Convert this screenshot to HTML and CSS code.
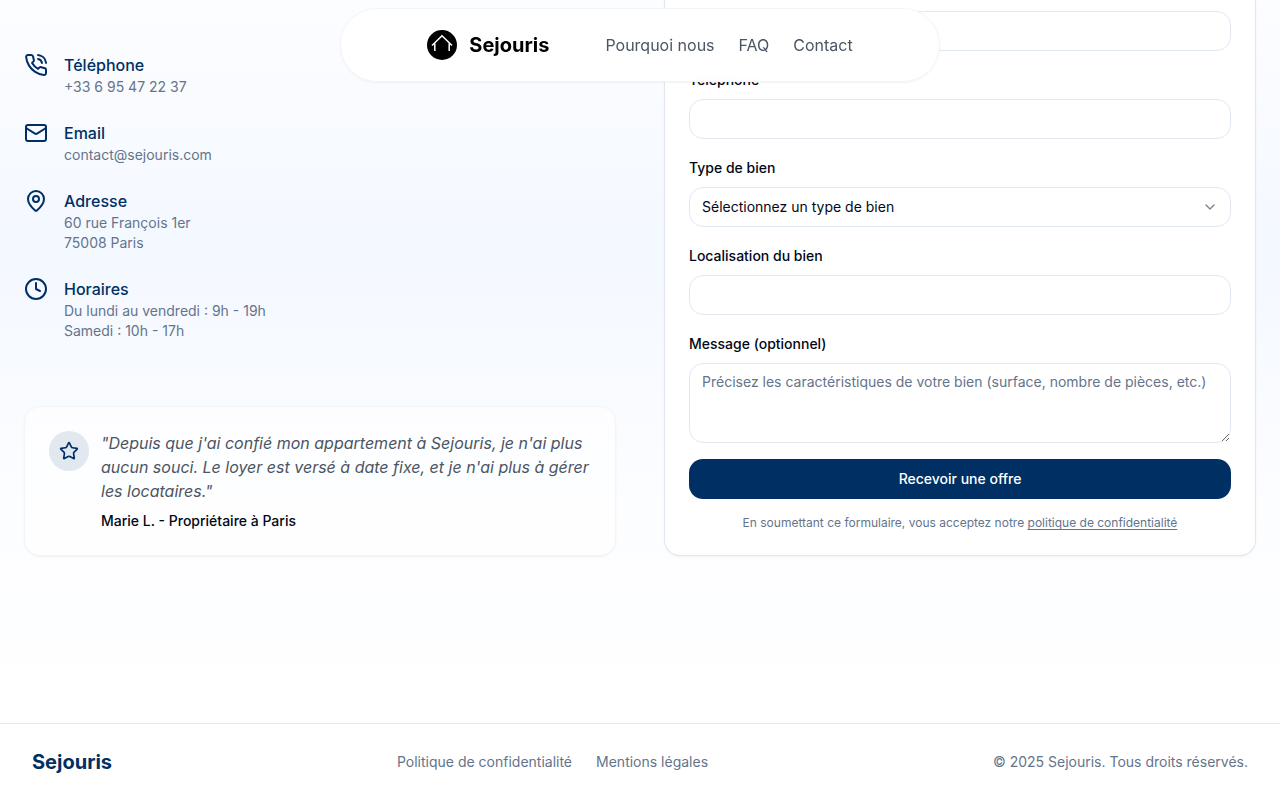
FILE: index.html
```html
<!DOCTYPE html>
<html lang="fr">
<head>
<meta charset="utf-8">
<meta name="viewport" content="width=device-width, initial-scale=1">
<title>Sejouris</title>
<link rel="stylesheet" href="styles.css">
</head>
<body>
<header class="navbar">
  <a class="brand" href="#">
    <svg class="brand-logo" viewBox="0 0 30 30" aria-hidden="true">
      <circle cx="15" cy="15" r="15" fill="#000"/>
      <path d="M5 15.500 15 5.800l10 9.700M7.800 13.500V21M22.200 13.500V21" fill="none" stroke="#fff" stroke-width="1.500"/>
    </svg>
    <span>Sejouris</span>
  </a>
  <nav class="nav-links">
    <a href="#">Pourquoi nous</a>
    <a href="#">FAQ</a>
    <a href="#">Contact</a>
  </nav>
</header>

<main class="contact">
  <div class="info">
    <ul class="details">
      <li class="detail">
        <svg class="icon" viewBox="0 0 24 24" aria-hidden="true"><path d="M22 16.920v3a2 2 0 0 1-2.180 2 19.790 19.790 0 0 1-8.630-3.070 19.500 19.500 0 0 1-6-6 19.790 19.790 0 0 1-3.070-8.670A2 2 0 0 1 4.110 2h3a2 2 0 0 1 2 1.720 12.840 12.840 0 0 0 .7 2.810 2 2 0 0 1-.45 2.110L8.090 9.910a16 16 0 0 0 6 6l1.270-1.270a2 2 0 0 1 2.110-.45 12.840 12.840 0 0 0 2.810.7A2 2 0 0 1 22 16.920z"/><path d="M14.050 2a9 9 0 0 1 8 7.940"/><path d="M14.050 6A5 5 0 0 1 18 10"/></svg>
        <div><h3>Téléphone</h3><p>+33 6 95 47 22 37</p></div>
      </li>
      <li class="detail">
        <svg class="icon" viewBox="0 0 24 24" aria-hidden="true"><rect width="20" height="16" x="2" y="4" rx="2"/><path d="m22 7-8.970 5.700a1.940 1.940 0 0 1-2.060 0L2 7"/></svg>
        <div><h3>Email</h3><p>contact@sejouris.com</p></div>
      </li>
      <li class="detail">
        <svg class="icon" viewBox="0 0 24 24" aria-hidden="true"><path d="M20 10c0 4.993-5.539 10.193-7.399 11.799a1 1 0 0 1-1.202 0C9.539 20.193 4 14.993 4 10a8 8 0 0 1 16 0"/><circle cx="12" cy="10" r="3"/></svg>
        <div><h3>Adresse</h3><p>60 rue François 1er<br>75008 Paris</p></div>
      </li>
      <li class="detail">
        <svg class="icon" viewBox="0 0 24 24" aria-hidden="true"><circle cx="12" cy="12" r="10"/><path d="M12 6v6l4 2"/></svg>
        <div><h3>Horaires</h3><p>Du lundi au vendredi : 9h - 19h<br>Samedi : 10h - 17h</p></div>
      </li>
    </ul>
    <figure class="quote">
      <span class="quote-badge">
        <svg class="star" viewBox="0 0 24 24" aria-hidden="true"><path d="M11.525 2.295a.53.53 0 0 1 .95 0l2.310 4.679a2.123 2.123 0 0 0 1.595 1.160l5.166.756a.53.53 0 0 1 .294.904l-3.736 3.638a2.123 2.123 0 0 0-.611 1.878l.882 5.140a.53.53 0 0 1-.771.560l-4.618-2.428a2.122 2.122 0 0 0-1.973 0L6.396 21.010a.53.53 0 0 1-.770-.560l.881-5.139a2.122 2.122 0 0 0-.611-1.879L2.160 9.795a.53.53 0 0 1 .294-.906l5.165-.755a2.122 2.122 0 0 0 1.597-1.160z"/></svg>
      </span>
      <div>
        <blockquote>"Depuis que j'ai confié mon appartement à Sejouris, je n'ai plus aucun souci. Le loyer est versé à date fixe, et je n'ai plus à gérer les locataires."</blockquote>
        <figcaption>Marie L. - Propriétaire à Paris</figcaption>
      </div>
    </figure>
  </div>

  <form class="card">
    <div class="field">
      <input id="email" type="email" aria-label="Email">
    </div>
    <div class="field">
      <label for="phone">Téléphone</label>
      <input id="phone" type="tel">
    </div>
    <div class="field">
      <label for="kind">Type de bien</label>
      <div class="select-wrap">
        <select id="kind"><option>Sélectionnez un type de bien</option></select>
        <svg class="chevron" viewBox="0 0 24 24" aria-hidden="true"><path d="m6 9 6 6 6-6"/></svg>
      </div>
    </div>
    <div class="field">
      <label for="place">Localisation du bien</label>
      <input id="place" type="text">
    </div>
    <div class="field">
      <label for="message">Message (optionnel)</label>
      <textarea id="message" placeholder="Précisez les caractéristiques de votre bien (surface, nombre de pièces, etc.)"></textarea>
    </div>
    <button class="submit" type="submit">Recevoir une offre</button>
    <p class="consent">En soumettant ce formulaire, vous acceptez notre <a href="#">politique de confidentialité</a></p>
  </form>
</main>

<footer class="footer">
  <a class="footer-brand" href="#">Sejouris</a>
  <nav class="footer-links">
    <a href="#">Politique de confidentialité</a>
    <a href="#">Mentions légales</a>
  </nav>
  <p>© 2025 Sejouris. Tous droits réservés.</p>
</footer>
</body>
</html>
```

FILE: styles.css
```css
* {
  box-sizing: border-box;
  margin: 0;
  padding: 0;
}

body {
  min-height: 100vh;
  display: flex;
  flex-direction: column;
  font-family: Inter, "Liberation Sans", sans-serif;
  font-size: 14px;
  line-height: 20px;
  color: #020817;
  background: #fff;
}

a {
  color: inherit;
  text-decoration: none;
}

/* Floating navigation */
.navbar {
  position: fixed;
  z-index: 10;
  top: 8px;
  left: 50%;
  transform: translateX(-50%);
  width: 600px;
  max-width: calc(100% - 32px);
  height: 74px;
  display: flex;
  align-items: center;
  justify-content: center;
  gap: 56px;
  border: 1px solid #f3f4f6;
  border-radius: 37px;
  background: rgba(255, 255, 255, 0.98);
  backdrop-filter: blur(4px);
  box-shadow: 0 1px 2px rgba(0, 0, 0, 0.05);
}

.brand {
  display: flex;
  align-items: center;
  gap: 12px;
  font-size: 20px;
  line-height: 28px;
  font-weight: 700;
  color: #000;
}

.brand-logo {
  width: 30px;
  height: 30px;
}

.nav-links {
  display: flex;
  gap: 24px;
  font-size: 16px;
  line-height: 24px;
  color: #4b5563;
}

/* Contact section */
.contact {
  flex: 1;
  display: grid;
  grid-template-columns: 1fr 1fr;
  align-items: start;
  gap: 48px;
  padding: 0 24px 167px;
  background: linear-gradient(to bottom, #fcfdff 0, #f4f8ff 250px, #fcfdff 500px, #fff 100%);
}

.info {
  padding-top: 53px;
}

.details {
  display: grid;
  gap: 24px;
  list-style: none;
}

.detail {
  display: flex;
  gap: 16px;
}

.icon,
.star,
.chevron {
  flex: none;
  fill: none;
  stroke: currentColor;
  stroke-width: 2;
  stroke-linecap: round;
  stroke-linejoin: round;
}

.icon {
  width: 24px;
  height: 24px;
  color: #002f64;
}

.detail h3 {
  font-size: 16px;
  line-height: 24px;
  font-weight: 500;
  color: #002f64;
}

.detail p {
  color: #64748b;
}

.quote {
  display: flex;
  gap: 12px;
  margin-top: 65px;
  padding: 24px;
  border: 1px solid #f3f4f6;
  border-radius: 16px;
  background: rgba(255, 255, 255, 0.6);
  box-shadow: 0 1px 2px rgba(0, 0, 0, 0.05);
}

.quote-badge {
  flex: none;
  display: flex;
  align-items: center;
  justify-content: center;
  width: 40px;
  height: 40px;
  border-radius: 50%;
  background: #e2e8f0;
  color: #002f64;
}

.star {
  width: 20px;
  height: 20px;
}

.quote blockquote {
  font-size: 16px;
  line-height: 24px;
  font-style: italic;
  color: #4b5563;
}

.quote figcaption {
  margin-top: 8px;
  font-weight: 500;
}

/* Estimate form */
.card {
  display: grid;
  gap: 16px;
  padding: 11px 24px 24px;
  border: 1px solid #e2e8f0;
  border-top: 0;
  border-radius: 0 0 16px 16px;
  background: #fff;
  box-shadow: 0 1px 2px rgba(0, 0, 0, 0.05);
}

.field {
  display: grid;
  gap: 8px;
}

.field label {
  padding-top: 2px;
  line-height: 22px;
  font-weight: 500;
}

.field input,
.field select,
.field textarea {
  width: 100%;
  height: 40px;
  padding: 8px 12px;
  border: 1px solid #e2e8f0;
  border-radius: 14px;
  background: #fff;
  font: inherit;
  color: inherit;
}

.field select {
  appearance: none;
}

.field textarea {
  display: block;
  height: 80px;
  resize: vertical;
}

.field textarea::placeholder {
  color: #64748b;
}

.select-wrap {
  position: relative;
}

.chevron {
  position: absolute;
  top: 12px;
  right: 13px;
  width: 16px;
  height: 16px;
  opacity: 0.5;
  pointer-events: none;
}

.submit {
  height: 40px;
  border: 0;
  border-radius: 14px;
  background: #002f64;
  color: #fff;
  font: inherit;
  font-weight: 500;
}

.consent {
  font-size: 12px;
  line-height: 16px;
  text-align: center;
  color: #64748b;
}

.consent a {
  text-decoration: underline;
  text-underline-offset: 2px;
}

/* Footer */
.footer {
  display: flex;
  align-items: center;
  justify-content: space-between;
  padding: 24px 32px;
  border-top: 1px solid #e5e7eb;
  background: #fff;
  color: #64748b;
}

.footer-brand {
  font-size: 20px;
  line-height: 28px;
  font-weight: 700;
  color: #002f64;
}

.footer-links {
  display: flex;
  gap: 24px;
}
```
